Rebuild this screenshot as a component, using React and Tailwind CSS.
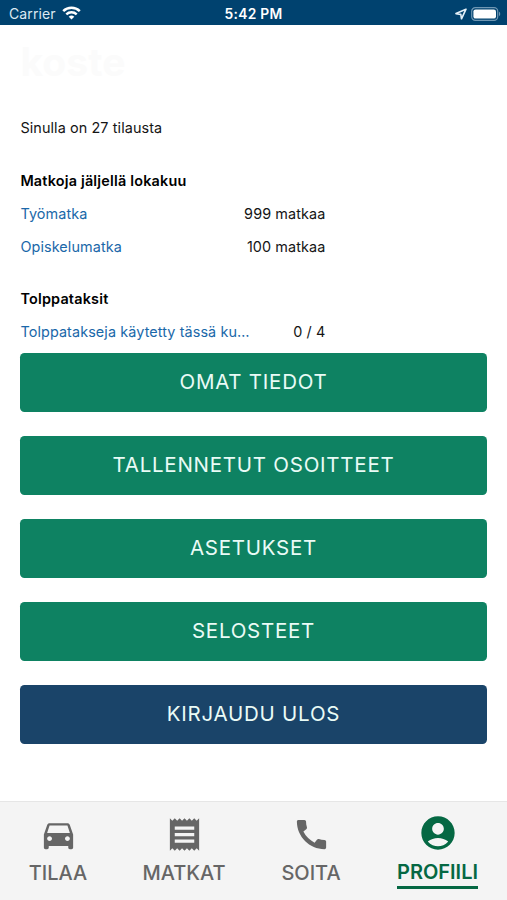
import { MdAccountCircle, MdCall, MdDirectionsCar, MdReceipt } from 'react-icons/md';

const trips = [
  { label: 'Työmatka', value: '999 matkaa' },
  { label: 'Opiskelumatka', value: '100 matkaa' },
];

const actions = [
  { label: 'OMAT TIEDOT', color: 'bg-[#0e8262]' },
  { label: 'TALLENNETUT OSOITTEET', color: 'bg-[#0e8262]' },
  { label: 'ASETUKSET', color: 'bg-[#0e8262]' },
  { label: 'SELOSTEET', color: 'bg-[#0e8262]' },
  { label: 'KIRJAUDU ULOS', color: 'bg-[#1a4469]' },
];

const tabs = [
  { label: 'TILAA', icon: MdDirectionsCar, width: 'w-[116px]' },
  { label: 'MATKAT', icon: MdReceipt, width: 'w-[136px]' },
  { label: 'SOITA', icon: MdCall, width: 'w-[118px]' },
  { label: 'PROFIILI', icon: MdAccountCircle, width: 'w-[135px]', active: true },
];

function StatusBar() {
  return (
    <header className="h-[25px] px-[9px] pt-[2px] grid grid-cols-3 items-center bg-[#00426f] text-white">
      <div className="flex items-center gap-[6px]">
        <span className="text-[14px] leading-6 tracking-[0.1px] text-[#dce9f2]">Carrier</span>
        <svg className="-mt-[2px]" width="19" height="14" viewBox="0 0 19 14" fill="none" stroke="#fff">
          <path d="M1.2 5.2a11.8 11.8 0 0 1 16.6 0" strokeWidth="2.5" />
          <path d="M4.3 8.4a7.4 7.4 0 0 1 10.4 0" strokeWidth="2.4" />
          <path d="M9.5 13.6 6.7 10.8a4 4 0 0 1 5.6 0z" fill="#fff" stroke="none" />
        </svg>
      </div>
      <span className="text-center text-[13.8px] leading-6 font-semibold tracking-[0.3px]">5:42 PM</span>
      <div className="flex items-center justify-end gap-[4px] -mr-[3px] -mt-[1px]">
        <svg width="12" height="12" viewBox="0 0 12 12" fill="none" stroke="#e4f0f8" strokeWidth="1.6" strokeLinejoin="round">
          <path d="M11 1.2 1 5.6l4.8.8.7 4.4z" />
        </svg>
        <svg width="30" height="14" viewBox="0 0 30 14">
          <rect x="0.7" y="0.7" width="26" height="12.6" rx="3.6" fill="none" stroke="#6f97b3" strokeWidth="1.2" />
          <rect x="2.4" y="2.4" width="22.6" height="9.2" rx="2.2" fill="#fff" />
          <path d="M28 4.8c1.6.6 1.6 3.8 0 4.4z" fill="#6f97b3" />
        </svg>
      </div>
    </header>
  );
}

function Row({ label, value }) {
  return (
    <div className="flex items-center justify-between h-[33px] w-[305px] whitespace-nowrap">
      <span className="text-[#1a68a9]">{label}</span>
      <span>{value}</span>
    </div>
  );
}

export default function App() {
  return (
    <div className="w-[507px] h-[900px] flex flex-col overflow-hidden bg-white text-[#151515]" style={{ fontFamily: 'Inter, sans-serif' }}>
      <StatusBar />

      <main className="flex-1 px-[20.4px] text-[14.4px] tracking-[0.1px]">
        {/* Logo */}
        <div className="h-[86px] pt-[16px]">
          <span className="block text-[39px] leading-[42px] font-bold text-[#fbfbfb]">koste</span>
        </div>

        <p className="h-[34px] leading-[33px]">Sinulla on 27 tilausta</p>

        {/* Remaining trips */}
        <h2 className="mt-[19px] h-[33px] leading-[33px] font-semibold tracking-[0.2px] text-black">Matkoja jäljellä lokakuu</h2>
        {trips.map((trip) => (
          <Row key={trip.label} {...trip} />
        ))}

        <h2 className="mt-[19px] h-[33px] leading-[33px] font-semibold tracking-[0.2px] text-black">Tolppataksit</h2>
        <Row label="Tolppatakseja käytetty tässä ku…" value="0 / 4" />

        {/* Actions */}
        <div className="mt-[5px] flex flex-col gap-[24.6px]">
          {actions.map((action) => (
            <button
              key={action.label}
              className={`h-[58.5px] w-full rounded-[4.5px] text-[20.5px] tracking-[0.75px] text-[#e9fbf6] ${action.color}`}
            >
              {action.label}
            </button>
          ))}
        </div>
      </main>

      {/* Tab bar */}
      <nav className="h-[99px] flex border-t border-[#e6e6e6] bg-[#f4f4f4]">
        {tabs.map(({ label, icon: Icon, width, active }) => (
          <a
            key={label}
            className={`flex flex-col items-center text-[20px] leading-6 ${width} ${active ? 'pt-[11px] font-semibold text-[#056843]' : 'pt-[13px] font-medium text-[#666666]'}`}
          >
            <Icon size={active ? 40 : 39} />
            <span className={active ? 'mt-[7px] h-[29px] border-b-[3px]' : 'mt-[7px]'}>{label}</span>
          </a>
        ))}
      </nav>
    </div>
  );
}
